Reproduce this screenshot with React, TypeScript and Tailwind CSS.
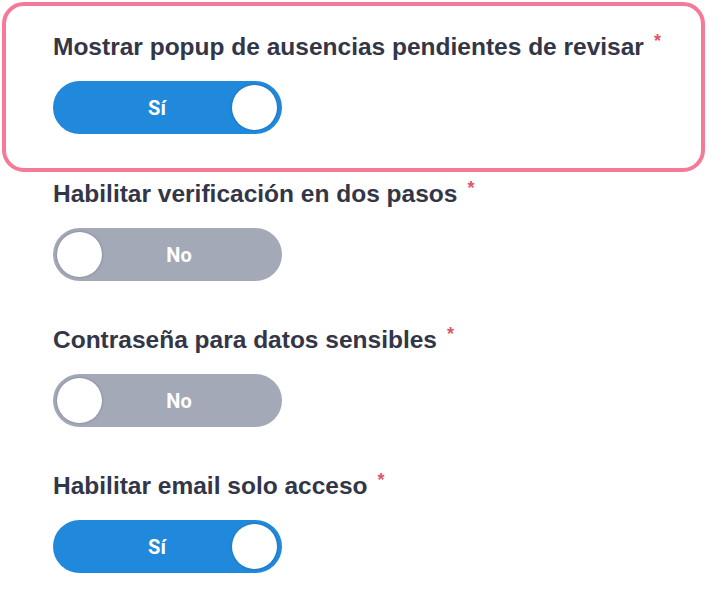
import { useState } from "react";

type Setting = { id: string; label: string; on: boolean };

const initial: Setting[] = [
  { id: "popup", label: "Mostrar popup de ausencias pendientes de revisar", on: true },
  { id: "2fa", label: "Habilitar verificación en dos pasos", on: false },
  { id: "pwd", label: "Contraseña para datos sensibles", on: false },
  { id: "email", label: "Habilitar email solo acceso", on: true },
];

function Toggle({ on, onClick }: { on: boolean; onClick: () => void }) {
  return (
    <button
      type="button"
      onClick={onClick}
      className={
        "relative flex h-[53px] w-[229px] items-center rounded-full " +
        (on ? "bg-[#2189dc] pl-0 pr-[21px]" : "bg-[#a4a9b8] pl-[23px] pr-0")
      }
    >
      <span className="flex-1 text-center font-['Roboto',sans-serif] text-[20px] font-bold text-white">
        {on ? "Sí" : "No"}
      </span>
      <span
        className={
          "absolute top-[4px] h-[45px] w-[45px] rounded-full bg-white shadow-[0_0_3px_rgba(0,0,0,0.25)] " +
          (on ? "right-[5px]" : "left-[4px]")
        }
      />
    </button>
  );
}

function Field({ s, onToggle }: { s: Setting; onToggle: () => void }) {
  return (
    <div className="flex flex-col gap-[18px]">
      <p className="whitespace-nowrap font-['Liberation_Sans',Arial,sans-serif] text-[24.5px] font-bold leading-[28px] text-[#333647]">
        {s.label}
        <span className="relative -top-[8px] ml-[10px] text-[18px] text-[#e0566a]">*</span>
      </p>
      <Toggle on={s.on} onClick={onToggle} />
    </div>
  );
}

export default function App() {
  const [settings, setSettings] = useState(initial);
  const flip = (id: string) =>
    setSettings((prev) => prev.map((x) => (x.id === id ? { ...x, on: !x.on } : x)));

  const [first, ...rest] = settings;

  return (
    <div className="h-[612px] w-[720px] bg-white p-[2px]">
      <div className="w-[703px] rounded-[22px] border-4 border-[#f57a97] pb-[34px] pl-[47px] pt-[27px]">
        <Field s={first} onToggle={() => flip(first.id)} />
      </div>
      <div className="mt-[8px] flex flex-col gap-[45px] pl-[51px]">
        {rest.map((s) => (
          <Field key={s.id} s={s} onToggle={() => flip(s.id)} />
        ))}
      </div>
    </div>
  );
}
